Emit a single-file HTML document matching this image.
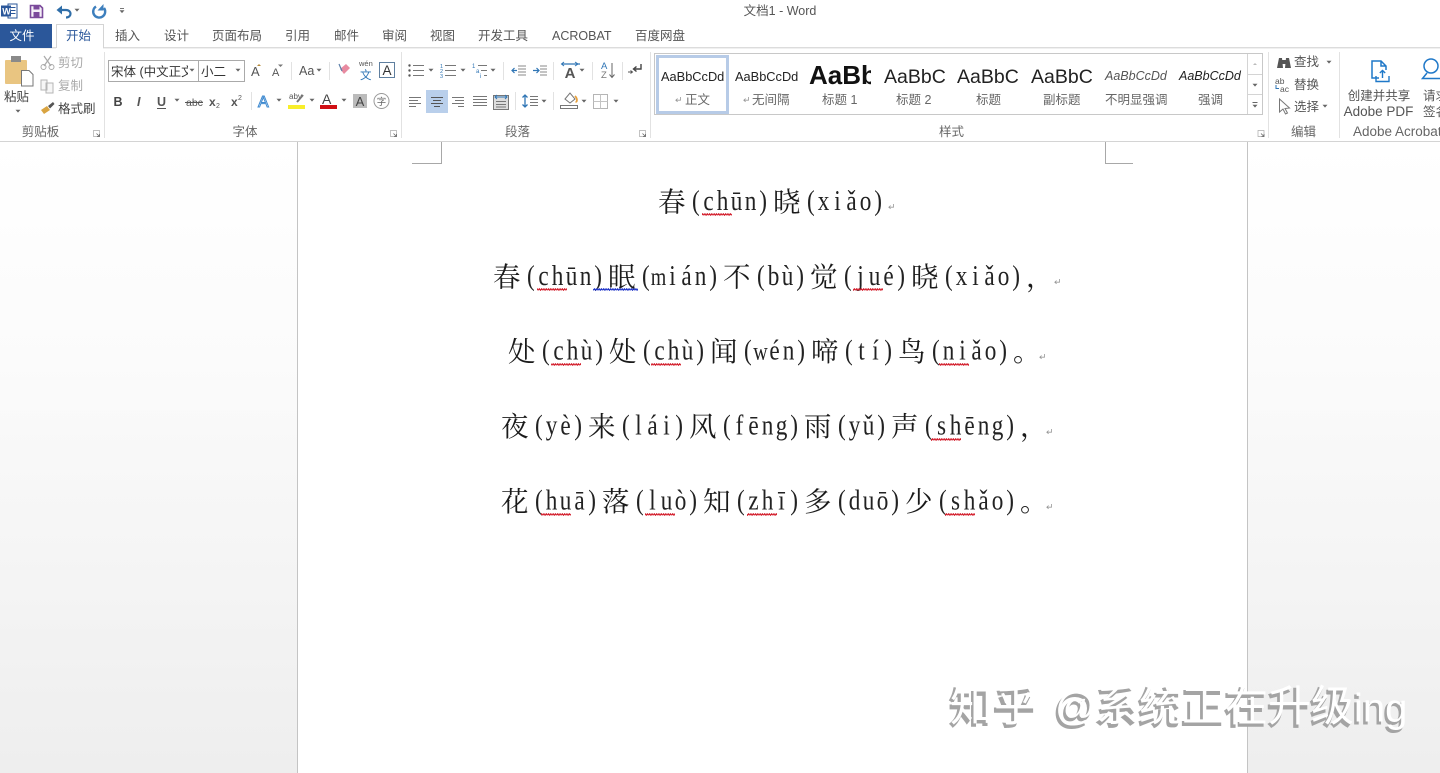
<!DOCTYPE html>
<html lang="zh">
<head>
<meta charset="utf-8">
<title>文档1 - Word</title>
<style>
html,body{margin:0;padding:0;background:#fff;width:1440px;height:773px;overflow:hidden}
svg{display:block;position:absolute;left:0;top:0}
text{font-family:"Liberation Sans","Noto Sans CJK SC",sans-serif;font-size:12.5px;fill:#555}
.c{text-anchor:middle}
.g{fill:#aaa}
.lb{fill:#666}
.doc{font-family:"Noto Serif CJK SC","Liberation Serif",serif;font-size:27.5px;fill:#1a1a1a}
.m{font-family:"Liberation Serif",serif;font-size:29px;fill:#222;text-anchor:middle}
.nw{font-size:25px}
.st{font-size:13px;fill:#222}
.sl{font-size:12.5px;fill:#666}
.h{font-size:22px;fill:#222}
.wa text{font-family:"Noto Sans CJK SC",sans-serif;font-size:43px}
.w1 text{fill:#a4a4a4;font-weight:700}
.w2 text{fill:#fff;font-weight:400}
.wa text.e{font-family:"Liberation Sans",sans-serif;font-size:40px;font-weight:400}
.w1 text.e{stroke:#a4a4a4;stroke-width:1}
.l{stroke:#666;stroke-width:1;fill:none}
.b{stroke:#2f75b5;stroke-width:1.2;fill:none}
</style>
</head>
<body>
<svg width="1440" height="773" viewBox="0 0 1440 773" xmlns="http://www.w3.org/2000/svg">
<defs>
<linearGradient id="gut" x1="0" y1="0" x2="0" y2="1"><stop offset="0" stop-color="#fff"/><stop offset=".35" stop-color="#fbfbfb"/><stop offset="1" stop-color="#eeeeee"/></linearGradient>
<path id="d" d="M-2.5 -1.2H2.5L0 1.6Z" fill="#666"/>
<g id="lau"><path d="M-3 -3H3V3H-3Z" fill="none" stroke="#aaa" stroke-width=".7"/><path d="M0 0L3 3M3 .5V3H.5" fill="none" stroke="#666" stroke-width=".8"/></g>
<pattern id="rw" width="4.6" height="3" patternUnits="userSpaceOnUse"><path d="M0 2.3L1.15 .7L2.3 2.3L3.45 .7L4.6 2.3" fill="none" stroke="#d3202e" stroke-width="1.1"/></pattern>
<pattern id="bw" width="4.6" height="3" patternUnits="userSpaceOnUse"><path d="M0 2.3L1.15 .7L2.3 2.3L3.45 .7L4.6 2.3" fill="none" stroke="#1f34c8" stroke-width="1.1"/></pattern>
<path id="pm" d="M5.5 0V3.2H1M2.6 1.6L.8 3.2L2.6 4.8" fill="none" stroke="#999" stroke-width=".8"/>
</defs>

<!-- Document area -->
<rect x="0" y="142" width="1440" height="631" fill="url(#gut)"/>
<rect x="298" y="142" width="949" height="631" fill="#fff"/>
<path d="M297.5 142V773M1247.5 142V773" stroke="#c4c4c4" stroke-width="1" fill="none"/>
<path d="M412 163.5H441.5V142M1133 163.5H1105.5V142" stroke="#a8a8a8" stroke-width="1" fill="none"/>

<!-- Line 1 -->
<text class="doc" x="658 773" y="211.5">春晓</text>
<text class="m" transform="translate(687.5,210) scale(.8,1)" x="10.5 26.25 43.75 61.25 78.75 94.5">(chūn)</text>
<text class="m" transform="translate(802.5,210) scale(.8,1)" x="10.5 26.25 43.75 61.25 78.75 94.5">(xiǎo)</text>
<!-- Line 2 -->
<text class="doc" x="493 608 723 810 911 1026" y="286.5">春眠不觉晓，</text>
<text class="m" transform="translate(522.5,285) scale(.8,1)" x="10.5 26.25 43.75 61.25 78.75 94.5">(chūn)</text>
<text class="m" transform="translate(637.5,285) scale(.8,1)" x="10.5 26.25 43.75 61.25 78.75 94.5">(<tspan class="nw">m</tspan>ián)</text>
<text class="m" transform="translate(752.5,285) scale(.8,1)" x="10.5 26.25 43.75 59.5">(bù)</text>
<text class="m" transform="translate(839.5,285) scale(.8,1)" x="10.5 26.25 43.75 61.25 77">(jué)</text>
<text class="m" transform="translate(940.5,285) scale(.8,1)" x="10.5 26.25 43.75 61.25 78.75 94.5">(xiǎo)</text>
<!-- Line 3 -->
<text class="doc" x="508 609 710 811 898 1013" y="361">处处闻啼鸟。</text>
<text class="m" transform="translate(537.5,359.5) scale(.8,1)" x="10.5 26.25 43.75 61.25 77">(chù)</text>
<text class="m" transform="translate(638.5,359.5) scale(.8,1)" x="10.5 26.25 43.75 61.25 77">(chù)</text>
<text class="m" transform="translate(739.5,359.5) scale(.8,1)" x="10.5 26.25 43.75 61.25 77">(<tspan class="nw">w</tspan>én)</text>
<text class="m" transform="translate(840.5,359.5) scale(.8,1)" x="10.5 26.25 43.75 59.5">(tí)</text>
<text class="m" transform="translate(927.5,359.5) scale(.8,1)" x="10.5 26.25 43.75 61.25 78.75 94.5">(niǎo)</text>
<!-- Line 4 -->
<text class="doc" x="501 588 689 804 891 1020" y="436">夜来风雨声，</text>
<text class="m" transform="translate(530.5,434.5) scale(.8,1)" x="10.5 26.25 43.75 59.5">(yè)</text>
<text class="m" transform="translate(617.5,434.5) scale(.8,1)" x="10.5 26.25 43.75 61.25 77">(lái)</text>
<text class="m" transform="translate(718.5,434.5) scale(.8,1)" x="10.5 26.25 43.75 61.25 78.75 94.5">(fēng)</text>
<text class="m" transform="translate(833.5,434.5) scale(.8,1)" x="10.5 26.25 43.75 59.5">(yǔ)</text>
<text class="m" transform="translate(920.5,434.5) scale(.8,1)" x="10.5 26.25 43.75 61.25 78.75 96.25 112">(shēng)</text>
<!-- Line 5 -->
<text class="doc" x="501 602 703 804 905 1020" y="511">花落知多少。</text>
<text class="m" transform="translate(530.5,509.5) scale(.8,1)" x="10.5 26.25 43.75 61.25 77">(huā)</text>
<text class="m" transform="translate(631.5,509.5) scale(.8,1)" x="10.5 26.25 43.75 61.25 77">(luò)</text>
<text class="m" transform="translate(732.5,509.5) scale(.8,1)" x="10.5 26.25 43.75 61.25 77">(zhī)</text>
<text class="m" transform="translate(833.5,509.5) scale(.8,1)" x="10.5 26.25 43.75 61.25 77">(duō)</text>
<text class="m" transform="translate(934.5,509.5) scale(.8,1)" x="10.5 26.25 43.75 61.25 78.75 94.5">(shǎo)</text>

<use href="#pm" x="888" y="204"/><use href="#pm" x="1054" y="279"/><use href="#pm" x="1039" y="354"/><use href="#pm" x="1046" y="429"/><use href="#pm" x="1046" y="504"/>

<g>
<rect x="702" y="213" width="30" height="3" fill="url(#rw)"/>
<rect x="537" y="288" width="30" height="3" fill="url(#rw)"/>
<rect x="593" y="288" width="45" height="3" fill="url(#bw)"/>
<rect x="853" y="288" width="30" height="3" fill="url(#rw)"/>
<rect x="551" y="363" width="30" height="3" fill="url(#rw)"/>
<rect x="651" y="363" width="30" height="3" fill="url(#rw)"/>
<rect x="939" y="363" width="30" height="3" fill="url(#rw)"/>
<rect x="931" y="438" width="30" height="3" fill="url(#rw)"/>
<rect x="541" y="513" width="30" height="3" fill="url(#rw)"/>
<rect x="645" y="513" width="30" height="3" fill="url(#rw)"/>
<rect x="747" y="513" width="30" height="3" fill="url(#rw)"/>
<rect x="945" y="513" width="30" height="3" fill="url(#rw)"/>
</g>

<!-- Watermark -->
<g class="wa w1">
<text x="948 992" y="724">知乎</text>
<text class="e" x="1053" y="723">@</text>
<text x="1094 1137 1180 1223 1266 1309" y="724">系统正在升级</text>
<text class="e" x="1352" y="724">ing</text>
</g>
<g class="wa w2">
<text x="950 994" y="721">知乎</text>
<text class="e" x="1055" y="720">@</text>
<text x="1096 1139 1182 1225 1268 1311" y="721">系统正在升级</text>
<text class="e" x="1354" y="721.5">ing</text>
</g>

<!-- Title bar -->
<rect x="0" y="0" width="1440" height="142" fill="#fff"/>
<path d="M0 141.5H1440" stroke="#d4d4d4"/>
<path d="M0 47.5H56M103 47.5H1440" stroke="#dcdcdc"/>
<path d="M0 48.5H56M103 48.5H1440" stroke="#f0f0f0"/>

<!-- QAT -->
<rect x="8" y="4" width="9" height="14" fill="#fff" stroke="#2b579a"/>
<path d="M11 7.5H15.5M11 10.5H15.5M11 13.5H15.5" stroke="#2b579a"/>
<rect x="1" y="5.5" width="10" height="11" fill="#2b579a"/>
<text x="2.2" y="14.5" style="font-size:9px;font-weight:700;fill:#fff">W</text>
<path d="M30.5 5.5H40L42.5 8V17.5H30.5Z" fill="#f4eff7" stroke="#7b4a9b" stroke-width="1.6"/>
<rect x="33.5" y="5" width="6" height="4.5" fill="#7b4a9b"/>
<rect x="33.5" y="12" width="6" height="5" fill="#7b4a9b"/>
<path d="M58 10H66C72 10 72 17.5 66 17.5" fill="none" stroke="#2f6ea8" stroke-width="2.2"/>
<path d="M56.5 10L62 5.5V14.5Z" fill="#2f6ea8"/>
<use href="#d" x="77" y="10"/>
<path d="M96 6.5A6 6 0 1 0 104 8" fill="none" stroke="#3d7fbd" stroke-width="2.4"/>
<path d="M103.5 4V10.5H97.5Z" fill="#3d7fbd"/>
<path d="M120 8.5H124" stroke="#777"/><use href="#d" x="122" y="11.5"/>
<text class="c" x="780" y="15" style="font-size:12.5px;fill:#555">文档1 - Word</text>

<!-- Tabs -->
<rect x="0" y="24" width="52" height="24" fill="#2b579a"/>
<text class="c" x="22" y="40" style="fill:#fff;font-size:12.5px">文件</text>
<path d="M56.5 48V24.5H103.5V48" fill="#fff" stroke="#d4d4d4"/>
<text class="c" x="78.5" y="40" style="fill:#2b579a">开始</text>
<text x="115" y="40">插入</text><text x="164" y="40">设计</text><text x="212" y="40">页面布局</text>
<text x="285" y="40">引用</text><text x="334" y="40">邮件</text><text x="382" y="40">审阅</text>
<text x="430" y="40">视图</text><text x="478" y="40">开发工具</text><text x="552" y="40">ACROBAT</text><text x="635" y="40">百度网盘</text>

<!-- Group separators -->
<path d="M104.5 52V138M401.5 52V138M650.5 52V138M1268.5 52V138M1339.5 52V138" stroke="#e2e2e2"/>

<!-- Clipboard -->
<rect x="5" y="60" width="22" height="24" rx="1" fill="#e9c581"/>
<rect x="11" y="56" width="10" height="6" fill="#8a8a8a"/>
<path d="M21.5 70.5H29L33 74.5V86H21.5Z" fill="#fff" stroke="#777"/>
<text x="4" y="101" style="fill:#444">粘贴</text>
<use href="#d" x="18" y="111"/>
<path d="M44 56L51 66M51 56L44 66" stroke="#aaa" stroke-width="1.2"/><circle cx="43.5" cy="67" r="2.5" fill="none" stroke="#aaa"/><circle cx="51.5" cy="67" r="2.5" fill="none" stroke="#aaa"/>
<text class="g" x="58" y="67">剪切</text>
<path d="M41 80H47V90H41ZM46 83H53V93H46Z" fill="#f6f6f6" stroke="#b5b5b5"/>
<text class="g" x="58" y="90">复制</text>
<path d="M41 110L47 106L50 110L44 114Z" fill="#d9a441"/><path d="M48 106L53 102L54.5 104L50 108.5Z" fill="#555"/>
<text x="58" y="113" style="fill:#444">格式刷</text>
<text class="c lb" x="40.5" y="136">剪贴板</text>
<use href="#lau" x="96.5" y="133.5"/>

<!-- Font -->
<rect x="108.5" y="60.5" width="90" height="21" fill="#fff" stroke="#aaa"/>
<rect x="198.5" y="60.5" width="46" height="21" fill="#fff" stroke="#aaa"/>
<svg x="110" y="60" width="78" height="22"><text x="1" y="16" style="font-size:12.5px;fill:#333">宋体 (中文正文</text></svg>
<use href="#d" x="192" y="70"/>
<text x="201" y="76" style="font-size:12.5px;fill:#333">小二</text>
<use href="#d" x="238" y="70"/>
<text x="251" y="76" style="font-size:13px">A</text><path d="M259 64L261 66H257Z" fill="#b58a3a"/>
<text x="272" y="76" style="font-size:11px">A</text><path d="M278 64.5H283L280.5 67Z" fill="#777"/>
<path d="M291.5 62V80" stroke="#e2e2e2"/>
<text x="299" y="75" style="font-size:12.5px">Aa</text><use href="#d" x="319" y="70"/>
<path d="M329.5 62V80" stroke="#e2e2e2"/>
<path d="M340 69L346 64L350 68L344 74Z" fill="#e88aa0"/><path d="M339 64L342 71" stroke="#5b7fa8" stroke-width="1.2"/>
<text x="359" y="66" style="font-size:7.5px;fill:#555">wén</text>
<text x="360" y="79" style="font-size:11.5px;fill:#2f75b5">文</text>
<rect x="379.5" y="62.5" width="15" height="15" fill="#fff" stroke="#5f7f9f"/>
<text class="c" x="387" y="75" style="font-size:13.5px;fill:#333">A</text>

<text x="113.5" y="106" style="font-size:12.5px;font-weight:700;fill:#444">B</text>
<text x="137" y="106" style="font-size:12.5px;font-weight:700;font-style:italic;fill:#555">I</text>
<text x="157" y="106" style="font-size:12.5px;font-weight:700;fill:#555">U</text><path d="M157 108.5H166" stroke="#555"/>
<use href="#d" x="177" y="100"/>
<text x="186" y="106" style="font-size:10.5px;fill:#555">abc</text><path d="M185 102.5H203" stroke="#555"/>
<text x="209" y="106" style="font-size:12px;font-weight:700">x</text><text x="216" y="108" style="font-size:7px">2</text>
<text x="231" y="106" style="font-size:12px;font-weight:700">x</text><text x="238" y="100" style="font-size:7px">2</text>
<path d="M251.5 92V110" stroke="#e2e2e2"/>
<text x="258" y="107" style="font-size:16px;fill:#fff;stroke:#3f8ad0;stroke-width:1">A</text><use href="#d" x="279" y="100"/>
<text x="289" y="99" style="font-size:8px">aby</text><path d="M297 102L303 95" stroke="#777" stroke-width="2"/>
<rect x="288" y="105" width="17" height="4" fill="#f8ee2a"/><use href="#d" x="312" y="100"/>
<text x="322" y="104" style="font-size:14px;fill:#444">A</text><rect x="320" y="105" width="17" height="4" fill="#d00f14"/><use href="#d" x="344" y="100"/>
<rect x="353" y="94" width="14" height="14" fill="#bbb"/><text class="c" x="360" y="106" style="font-size:13px;fill:#444">A</text>
<circle cx="381.5" cy="101" r="7.5" fill="#fff" stroke="#999"/><text class="c" x="381.5" y="105" style="font-size:9.5px;fill:#666">字</text>
<text class="c lb" x="245" y="136">字体</text>
<use href="#lau" x="393.5" y="133.5"/>

<!-- Paragraph row 1 -->
<g stroke="#777" fill="none">
<path d="M413 65.5H424M413 70.5H424M413 75.5H424"/>
<path d="M445 65.5H456M445 70.5H456M445 75.5H456"/>
<path d="M478 65.5H487M481 70.5H487M484 75.5H487"/>
</g>
<g fill="#555"><circle cx="409.5" cy="65.5" r="1.2"/><circle cx="409.5" cy="70.5" r="1.2"/><circle cx="409.5" cy="75.5" r="1.2"/></g>
<text x="440" y="68" style="font-size:5.5px;fill:#2f75b5">1</text><text x="440" y="73" style="font-size:5.5px;fill:#2f75b5">2</text><text x="440" y="78" style="font-size:5.5px;fill:#2f75b5">3</text>
<text x="472" y="68" style="font-size:6px;fill:#2f75b5">1</text><text x="476" y="73" style="font-size:6px;fill:#2f75b5">a</text><text x="480" y="78" style="font-size:6px;fill:#2f75b5">i</text>
<use href="#d" x="431" y="70"/><use href="#d" x="463" y="70"/><use href="#d" x="493" y="70"/>
<path d="M503.5 62V80M553.5 62V80M592.5 62V80M622.5 62V80" stroke="#e2e2e2"/>
<path d="M518 66H526M518 69H526M518 72H526M518 75H526" stroke="#888"/><path d="M517 70.5H512M514.5 68L512 70.5L514.5 73" stroke="#2f75b5" fill="none" stroke-width="1.2"/>
<path d="M540 66H547M540 69H547M540 72H547M540 75H547" stroke="#888"/><path d="M533 70.5H539M536.5 68L539 70.5L536.5 73" stroke="#2f75b5" fill="none" stroke-width="1.2"/>
<path d="M562 64H571M580 64H571" stroke="#2f75b5" fill="none" stroke-width="1.2"/><path d="M564 62L561.5 64L564 66M575 62L578 64L575 66" stroke="#2f75b5" fill="none"/>
<text class="c" x="570" y="78" style="font-size:15px;font-weight:700;fill:#555">A</text>
<use href="#d" x="582" y="70"/>
<text x="601" y="69" style="font-size:9.5px;fill:#2f75b5">A</text><text x="601" y="78" style="font-size:9.5px;fill:#777">Z</text>
<path d="M612 63V77M609.5 74.5L612 77.5L614.5 74.5" stroke="#666" fill="none"/>
<path d="M641 64V69H634M636.5 66.5L633.5 69L636.5 71.5" stroke="#444" fill="none" stroke-width="1.4"/>
<path d="M628 72H632M630.5 70.5L632.5 72L630.5 73.5" stroke="#555" fill="none"/>

<!-- Paragraph row 2 -->
<rect x="426" y="90" width="22" height="23" fill="#b9cfeb"/>
<g stroke="#777" fill="none">
<path d="M409 97.5H421M409 100.5H418M409 103.5H421M409 106.5H416"/>
<path d="M431 97.5H443M433 100.5H441M431 103.5H443M434 106.5H440" stroke="#555"/>
<path d="M452 97.5H464M455 100.5H464M452 103.5H464M458 106.5H464"/>
<path d="M473 96.5H487M473 99.5H487M473 102.5H487M473 105.5H487"/>
<rect x="493.5" y="95.5" width="15" height="14" fill="#ddd"/>
<path d="M496 101.5H506M496 104.5H506M496 107H506"/>
</g>
<path d="M495 97H507M497 95L495 97L497 99M505 95L507 97L505 99" stroke="#2f75b5" fill="none"/>
<path d="M515.5 92V110M553.5 92V110" stroke="#e2e2e2"/>
<path d="M525 95V107M522.5 97.5L525 95L527.5 97.5M522.5 104.5L525 107L527.5 104.5" stroke="#2f75b5" fill="none" stroke-width="1.3"/>
<path d="M530 96.5H538M530 99.5H538M530 102.5H538M530 105.5H538" stroke="#777"/>
<use href="#d" x="544" y="101"/>
<path d="M565 99L570 93L575 99L570 103Z" fill="#fff" stroke="#777"/><path d="M575 96C578 99 577 102 575.5 102" stroke="#e8a13c" fill="none" stroke-width="1.8"/>
<rect x="560.5" y="105.5" width="17" height="3" fill="#fff" stroke="#777"/>
<use href="#d" x="584" y="101"/>
<rect x="593.5" y="94.5" width="14" height="14" fill="none" stroke="#b5b5b5"/><path d="M600.5 94.5V108.5M593.5 101.5H607.5" stroke="#c4c4c4"/>
<use href="#d" x="616" y="101"/>
<text class="c lb" x="517.5" y="136">段落</text>
<use href="#lau" x="642.5" y="133.5"/>

<!-- Styles gallery -->
<rect x="654.5" y="53.5" width="608" height="61" fill="#fff" stroke="#c8c8c8"/>
<rect x="657.5" y="56.5" width="70" height="56" fill="#fff" stroke="#b7cbe7" stroke-width="3"/>
<path d="M1247.5 54V114M1248 74.5H1262M1248 94.5H1262" stroke="#d4d4d4"/>
<path d="M1253 65H1257L1255 63Z" fill="#bbb"/><use href="#d" x="1255" y="85"/>
<path d="M1252.5 102.5H1257.5" stroke="#666"/><use href="#d" x="1255" y="106"/>

<text class="st" x="661" y="81" style="font-size:12.8px">AaBbCcDd</text>
<text class="st" x="735" y="81" style="font-size:12.8px">AaBbCcDd</text>
<svg x="806" y="55" width="65" height="40"><text x="3" y="29" style="font-size:26px;font-weight:700;fill:#111">AaBb</text></svg>
<text class="h" x="884" y="83" style="font-size:19.5px">AaBbC</text>
<text class="h" x="957" y="83" style="font-size:19.5px">AaBbC</text>
<text class="h" x="1031" y="83" style="font-size:19.5px">AaBbC</text>
<text x="1105" y="80" style="font-size:12.5px;font-style:italic;fill:#555">AaBbCcDd</text>
<text x="1179" y="80" style="font-size:12.5px;font-style:italic;fill:#222">AaBbCcDd</text>

<use href="#pm" x="675" y="97"/><text class="sl" x="685" y="104">正文</text>
<use href="#pm" x="743" y="97"/><text class="sl" x="752" y="104">无间隔</text>
<text class="sl" x="822" y="104">标题 1</text>
<text class="sl" x="896" y="104">标题 2</text>
<text class="sl" x="976" y="104">标题</text>
<text class="sl" x="1043" y="104">副标题</text>
<text class="sl" x="1105" y="104">不明显强调</text>
<text class="sl" x="1198" y="104">强调</text>
<text class="c lb" x="951.5" y="136">样式</text>
<use href="#lau" x="1261" y="133.5"/>

<!-- Editing -->
<path d="M1277 68L1279 58H1282L1283 68ZM1285 68L1286 58H1289L1291 68Z" fill="#555"/><rect x="1282" y="60" width="4" height="4" fill="#555"/>
<text x="1294" y="66" style="fill:#555">查找</text><use href="#d" x="1329" y="62"/>
<text x="1275" y="84" style="font-size:8.5px;fill:#555">ab</text><text x="1280" y="92" style="font-size:8.5px;fill:#555">ac</text>
<path d="M1276 85V88.5H1279" stroke="#2f75b5" fill="none"/>
<text x="1294" y="89" style="fill:#555">替换</text>
<path d="M1279.5 99V112L1283 109L1285.5 114L1287.5 113L1285 108.5L1289.5 108Z" fill="#fff" stroke="#777"/>
<text x="1294" y="111" style="fill:#555">选择</text><use href="#d" x="1325" y="106"/>
<text class="c lb" x="1303.5" y="136">编辑</text>

<!-- Acrobat -->
<path d="M1379 78H1372V61H1381L1386 66V70M1381 61V66H1386" fill="none" stroke="#1f78c8" stroke-width="1.5"/>
<path d="M1376 76V81.5H1389V76M1382.5 78V70.5M1379.8 73L1382.5 70.5L1385.2 73" fill="none" stroke="#1f78c8" stroke-width="1.4"/>
<text class="c" x="1379" y="100" style="font-size:12.5px">创建并共享</text>
<text class="c" x="1378.5" y="116" style="font-size:13.5px">Adobe PDF</text>
<circle cx="1431" cy="66" r="7" fill="none" stroke="#1f78c8" stroke-width="1.5"/>
<path d="M1427 73L1422.5 78.5H1440" fill="none" stroke="#1f78c8" stroke-width="1.5"/>
<text x="1423" y="100">请求</text><text x="1423" y="116">签名</text>
<text x="1353" y="136" style="font-size:13.5px;fill:#666">Adobe Acrobat</text>
</svg>
</body>
</html>
